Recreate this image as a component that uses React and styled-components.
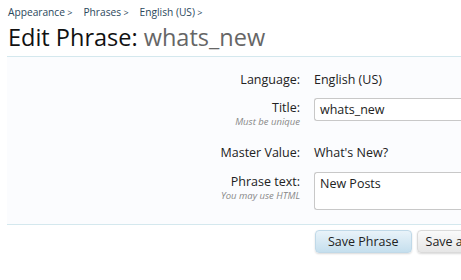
import React from "react";
import styled, { createGlobalStyle } from "styled-components";

const Global = createGlobalStyle`
  html, body { margin: 0; padding: 0; background: #fff; }
  body { font-family: "Open Sans", "DejaVu Sans", sans-serif; color: #222; overflow: hidden; }
`;

const Page = styled.div`
  width: 461px;
  height: 280px;
  background: #fff;
  overflow: hidden;
`;

const Header = styled.div`
  padding: 4px 0 0 8px;
`;

const Crumbs = styled.nav`
  display: flex;
  gap: 11px;
  font-size: 10.2px;
  color: #2b485c;
  height: 16px;
  align-items: center;
`;

const Crumb = styled.a`
  color: #2b485c;
  text-decoration: none;
  &::after { content: " >"; font-size: 9px; }
`;

const Title = styled.h1`
  margin: 1px 0 0;
  font-size: 23.5px;
  font-weight: normal;
  color: #111;
  height: 32px;
  line-height: 32px;
  white-space: nowrap;
`;

const Muted = styled.span`
  color: #666;
`;

const Form = styled.div`
  margin: 3px 0 0 7px;
  border-top: 1px solid #d4e8ee;
  border-bottom: 1px solid #d4e8ee;
  background: #fbfcfe;
  padding: 13px 0 12px;
  display: flex;
  flex-direction: column;
`;

const Row = styled.div`
  display: grid;
  grid-template-columns: 293px 1fr;
  column-gap: 14px;
  min-height: ${(p) => p.h}px;
`;

const Label = styled.div`
  text-align: right;
  font-size: 12.5px;
  line-height: 16px;
  padding-top: ${(p) => p.pt || 0}px;
`;

const Hint = styled.div`
  font-size: 9.5px;
  font-style: italic;
  color: #888;
  line-height: 12px;
`;

const Value = styled.div`
  font-size: 12.5px;
  line-height: 16px;
  padding-top: ${(p) => p.pt || 0}px;
`;

const Input = styled.div`
  height: 23px;
  border: 1px solid #c8c8c8;
  border-right: none;
  border-radius: 3px 0 0 3px;
  background: #fff;
  font-size: 12.5px;
  line-height: 21px;
  padding: 0 5px;
  box-sizing: border-box;
`;

const TextArea = styled(Input)`
  height: 38px;
  line-height: 18px;
  padding-top: 2px;
`;

const Buttons = styled.div`
  display: flex;
  gap: 5px;
  padding: 5px 0 0 315px;
`;

const Button = styled.button`
  flex: none;
  font-family: inherit;
  font-size: 12.5px;
  height: 23px;
  padding: 0 ${(p) => (p.primary ? 12 : 8)}px;
  border: 1px solid ${(p) => (p.primary ? "#c0d9e8" : "#dadada")};
  border-radius: 4px;
  color: #222;
  white-space: nowrap;
  background: ${(p) =>
    p.primary
      ? "linear-gradient(#e9f3f9, #c5dfee)"
      : "linear-gradient(#fafafa, #e6e6e6)"};
  box-shadow: 0 1px 2px rgba(0,0,0,0.15);
`;

export default function App() {
  return (
    <Page>
      <Global />
      <Header>
        <Crumbs>
          <Crumb>Appearance</Crumb>
          <Crumb>Phrases</Crumb>
          <Crumb>English (US)</Crumb>
        </Crumbs>
        <Title>
          Edit Phrase: <Muted>whats_new</Muted>
        </Title>
      </Header>
      <Form>
        <Row h={28}>
          <Label pt={2}>Language:</Label>
          <Value pt={2}>English (US)</Value>
        </Row>
        <Row h={47}>
          <Label pt={2}>
            Title:
            <Hint>Must be unique</Hint>
          </Label>
          <Input>whats_new</Input>
        </Row>
        <Row h={27}>
          <Label>Master Value:</Label>
          <Value>What's New?</Value>
        </Row>
        <Row h={40}>
          <Label pt={2}>
            Phrase text:
            <Hint>You may use HTML</Hint>
          </Label>
          <TextArea>New Posts</TextArea>
        </Row>
      </Form>
      <Buttons>
        <Button primary>Save Phrase</Button>
        <Button>Save and Exit</Button>
      </Buttons>
    </Page>
  );
}
